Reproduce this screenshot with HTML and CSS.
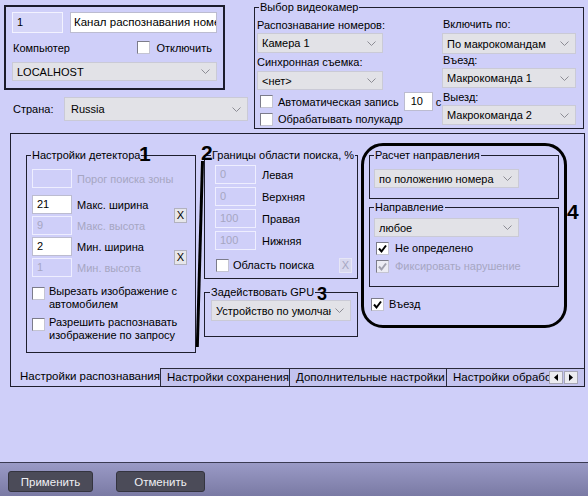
FILE: index.html
```html
<!DOCTYPE html>
<html lang="ru">

<head>
    <meta charset="UTF-8">
    <meta name="viewport" content="width=device-width, initial-scale=1.0">
    <title>Канал распознавания номеров</title>
    <link rel="stylesheet" href="styles.css">
</head>

<body>
    <div class="top">
        <div class="left-col">
            <div class="channel">
                <div class="channel-row">
                    <div class="field field-id">1</div>
                    <div class="field field-name">Канал распознавания номеров</div>
                </div>
                <div class="computer-row">
                    <span>Компьютер</span>
                    <span class="check"><span class="box"></span>Отключить</span>
                </div>
                <div class="select select-host"><span>LOCALHOST</span><svg class="chev" width="9" height="5"><polyline points="0.5,0.5 4.5,4.5 8.5,0.5" /></svg></div>
            </div>
            <div class="country">
                <span class="country-label">Страна:</span>
                <div class="select select-country"><span>Russia</span><svg class="chev" width="9" height="5"><polyline points="0.5,0.5 4.5,4.5 8.5,0.5" /></svg></div>
            </div>
        </div>

        <fieldset class="group cameras">
            <legend>Выбор видеокамер</legend>
            <div class="cam-cols">
                <div class="cam-left">
                    <div class="lbl cam-lbl1">Распознавание номеров:</div>
                    <div class="select cam-sel1"><span>Камера 1</span><svg class="chev" width="9" height="5"><polyline points="0.5,0.5 4.5,4.5 8.5,0.5" /></svg></div>
                    <div class="lbl cam-lbl2">Синхронная съемка:</div>
                    <div class="select cam-sel2"><span>&lt;нет&gt;</span><svg class="chev" width="9" height="5"><polyline points="0.5,0.5 4.5,4.5 8.5,0.5" /></svg></div>
                    <div class="auto-row">
                        <span class="check"><span class="box"></span>Автоматическая запись</span>
                        <div class="field field-sec">10</div>
                        <span class="sec">с</span>
                    </div>
                    <div class="half-row">
                        <span class="check"><span class="box"></span>Обрабатывать полукадр</span>
                    </div>
                </div>
                <div class="cam-right">
                    <div class="lbl r-lbl1">Включить по:</div>
                    <div class="select r-sel1"><span>По макрокомандам</span><svg class="chev" width="9" height="5"><polyline points="0.5,0.5 4.5,4.5 8.5,0.5" /></svg></div>
                    <div class="lbl r-lbl2">Въезд:</div>
                    <div class="select r-sel2"><span>Макрокоманда 1</span><svg class="chev" width="9" height="5"><polyline points="0.5,0.5 4.5,4.5 8.5,0.5" /></svg></div>
                    <div class="lbl r-lbl3">Выезд:</div>
                    <div class="select r-sel3"><span>Макрокоманда 2</span><svg class="chev" width="9" height="5"><polyline points="0.5,0.5 4.5,4.5 8.5,0.5" /></svg></div>
                </div>
            </div>
        </fieldset>
    </div>

    <div class="panel">
        <div class="panel-body">
            <fieldset class="group detector">
                <legend>Настройки детектора</legend>
                <div class="det-inner">
                    <div class="det-first">
                        <div class="field field-off"></div>
                        <span class="off">Порог поиска зоны</span>
                    </div>
                    <div class="det-grid">
                        <div class="field">21</div>
                        <span>Макс. ширина</span>
                        <div class="xbtn x1">X</div>
                        <div class="field field-off">9</div>
                        <span class="off">Макс. высота</span>
                        <div class="field">2</div>
                        <span>Мин. ширина</span>
                        <div class="xbtn x2">X</div>
                        <div class="field field-off">1</div>
                        <span class="off">Мин. высота</span>
                    </div>
                    <div class="check multi cut">
                        <span class="box"></span>
                        <span>Вырезать изображение с<br>автомобилем</span>
                    </div>
                    <div class="check multi allow">
                        <span class="box"></span>
                        <span>Разрешить распознавать<br>изображение по запросу</span>
                    </div>
                </div>
            </fieldset>

            <div class="mid-col">
                <fieldset class="group bounds">
                    <legend>Границы области поиска, %</legend>
                    <div class="bounds-inner">
                        <div class="bound-row"><div class="field field-off">0</div><span>Левая</span></div>
                        <div class="bound-row"><div class="field field-off">0</div><span>Верхняя</span></div>
                        <div class="bound-row"><div class="field field-off">100</div><span>Правая</span></div>
                        <div class="bound-row"><div class="field field-off">100</div><span>Нижняя</span></div>
                        <div class="area-row">
                            <span class="check"><span class="box"></span>Область поиска</span>
                            <div class="xbtn xbtn-off">X</div>
                        </div>
                    </div>
                </fieldset>
                <fieldset class="group gpu">
                    <legend>Задействовать GPU</legend>
                    <div class="select gpu-sel"><span>Устройство по умолчанию</span><svg class="chev" width="9" height="5"><polyline points="0.5,0.5 4.5,4.5 8.5,0.5" /></svg></div>
                </fieldset>
            </div>

            <div class="dir-col">
                <fieldset class="group calc">
                    <legend>Расчет направления</legend>
                    <div class="select calc-sel"><span>по положению номера</span><svg class="chev" width="9" height="5"><polyline points="0.5,0.5 4.5,4.5 8.5,0.5" /></svg></div>
                </fieldset>
                <fieldset class="group direction">
                    <legend>Направление</legend>
                    <div class="select dir-sel"><span>любое</span><svg class="chev" width="9" height="5"><polyline points="0.5,0.5 4.5,4.5 8.5,0.5" /></svg></div>
                    <div class="dir-check"><span class="check"><span class="box checked"><svg width="11" height="11"><polyline points="2,5.5 4.5,8.5 9,2.5" /></svg></span>Не определено</span></div>
                    <div class="dir-check"><span class="check off"><span class="box checked box-off"><svg width="11" height="11"><polyline points="2,5.5 4.5,8.5 9,2.5" /></svg></span>Фиксировать нарушение</span></div>
                </fieldset>
                <div class="entry-row"><span class="check"><span class="box checked"><svg width="11" height="11"><polyline points="2,5.5 4.5,8.5 9,2.5" /></svg></span>Въезд</span></div>
            </div>
        </div>

        <div class="tabs">
            <div class="tab tab-active">Настройки распознавания</div>
            <div class="tab tab2">Настройки сохранения</div>
            <div class="tab tab3">Дополнительные настройки</div>
            <div class="tab tab4">Настройки обработки</div>
            <div class="tab-arrows">
                <span class="arrow"><svg width="4" height="7"><polygon points="4,0 0,3.5 4,7" /></svg></span>
                <span class="arrow"><svg width="4" height="7"><polygon points="0,0 4,3.5 0,7" /></svg></span>
            </div>
        </div>

        <!-- пометки поверх формы -->
        <span class="mark mark1">1</span>
        <span class="mark mark2">2</span>
        <span class="mark mark3">3</span>
        <span class="mark mark4">4</span>
        <div class="bar2"></div>
        <div class="frame4"></div>
    </div>

    <div class="spacer"></div>

    <div class="footer">
        <button class="btn">Применить</button>
        <button class="btn btn-cancel">Отменить</button>
    </div>
</body>

</html>
```

FILE: styles.css
```css
* {
    box-sizing: border-box;
}

body {
    margin: 0;
    width: 588px;
    height: 496px;
    overflow: hidden;
    background-color: #cfcff9;
    font-family: "Liberation Sans", Arial, sans-serif;
    font-size: 11px;
    line-height: 14px;
    color: #000;
    display: flex;
    flex-direction: column;
}

/* common controls */

.field {
    height: 19px;
    background-color: #fff;
    border: 1px solid #bcbcd0;
    padding-left: 4px;
    line-height: 17px;
    white-space: nowrap;
    overflow: hidden;
}

.field-off {
    background-color: transparent;
    border-color: #eeeeff;
    color: #a6a6c2;
}

.off {
    color: #a6a6c2;
}

.select {
    display: flex;
    align-items: center;
    background-color: #e2e2e7;
    border: 1px solid #cacad6;
    padding: 0 6px 0 4px;
    white-space: nowrap;
    overflow: hidden;
}

.select span {
    flex: 1;
    overflow: hidden;
}

.chev {
    flex: none;
    margin-left: 4px;
}

.chev polyline {
    fill: none;
    stroke: #8c8c94;
    stroke-width: 1;
}

.check {
    display: flex;
    align-items: center;
    white-space: nowrap;
}

.box {
    width: 13px;
    height: 13px;
    flex: none;
    margin-right: 4px;
    background-color: #fff;
    border: 1px solid;
    border-color: #7c7c8a #c4c4d2 #c4c4d2 #7c7c8a;
    display: flex;
    align-items: center;
    justify-content: center;
}

.box svg polyline {
    fill: none;
    stroke: #000;
    stroke-width: 2;
}

.box-off {
    background-color: #ececf4;
}

.box-off svg polyline {
    stroke: #a0a0ae;
}

.xbtn {
    width: 13px;
    height: 15px;
    background-color: #e6e6ea;
    border: 1px solid #b2b2be;
    font-size: 11px;
    line-height: 13px;
    text-align: center;
}

.xbtn-off {
    background-color: #d8d8ee;
    border-color: #e6e6f6;
    color: #a6a6c2;
}

.group {
    margin: 0;
    padding: 0;
    min-width: 0;
    border: 1px solid #1e1e2e;
}

.group legend {
    padding: 0 1px;
    line-height: 14px;
    height: 14px;
    white-space: nowrap;
}

/* top area */

.top {
    display: flex;
    height: 133px;
    flex: none;
}

.left-col {
    width: 253px;
}

.channel {
    margin: 5px 0 0 4px;
    width: 221px;
    height: 85px;
    border: 2px solid #1c1c2c;
    padding: 5px 0 0 6px;
}

.channel-row {
    display: flex;
    gap: 7px;
}

.field-id {
    width: 51px;
    height: 21px;
    line-height: 19px;
    background-color: #d6d6f8;
    border-color: #f2f2ff;
}

.field-name {
    width: 147px;
    height: 21px;
    line-height: 19px;
    padding-left: 3px;
    font-size: 11.5px;
}

.computer-row {
    height: 29px;
    margin-right: 11px;
    padding-left: 1px;
    display: flex;
    align-items: center;
    justify-content: space-between;
}

.computer-row .box {
    margin-right: 6px;
}

.select-host {
    width: 205px;
    height: 19px;
}

.country {
    margin-top: 7px;
    display: flex;
    align-items: center;
}

.country-label {
    width: 64px;
    padding-left: 13px;
}

.select-country {
    width: 184px;
    height: 24px;
    padding-left: 6px;
}

.cameras {
    margin-left: 1px;
    width: 330px;
    height: 129px;
}

.cameras legend {
    margin-left: 4px;
}

.cam-cols {
    display: flex;
    padding-left: 2px;
}

.cam-left {
    width: 185px;
}

.cam-right {
    width: 134px;
}

.cam-lbl1 {
    height: 19px;
    padding-top: 4px;
}

.cam-sel1 {
    width: 126px;
    height: 20px;
}

.cam-lbl2 {
    height: 18px;
    padding-top: 2px;
}

.cam-sel2 {
    width: 126px;
    height: 19px;
}

.auto-row {
    margin-top: 2px;
    height: 19px;
    display: flex;
    align-items: center;
    padding-left: 3px;
}

.auto-row .box,
.half-row .box {
    margin-right: 5px;
}

.field-sec {
    width: 29px;
    height: 19px;
    margin-left: 5px;
    padding-left: 6px;
}

.sec {
    margin-left: 3px;
}

.half-row {
    height: 16px;
    display: flex;
    align-items: center;
    padding-left: 3px;
}

.r-lbl1 {
    height: 19px;
    padding-top: 3px;
    padding-left: 1px;
}

.r-sel1 {
    height: 21px;
}

.r-lbl2 {
    height: 14px;
    line-height: 13px;
    padding-left: 1px;
}

.r-sel2 {
    height: 20px;
}

.r-lbl3 {
    height: 17px;
    padding-top: 2px;
    padding-left: 1px;
}

.r-sel3 {
    height: 20px;
}

/* main panel */

.panel {
    position: relative;
    flex: none;
    margin-left: 10px;
    width: 575px;
    height: 254px;
    border: 1px solid #1e1e2e;
    display: flex;
    flex-direction: column;
}

.panel-body {
    flex: 1;
    display: flex;
    align-items: flex-start;
    padding: 14px 0 0 15px;
}

.detector {
    width: 170px;
    height: 205px;
}

.detector legend {
    margin-left: 4px;
}

.det-inner {
    padding-left: 5px;
}

.det-first {
    margin-top: 7px;
    display: flex;
    align-items: center;
    gap: 5px;
}

.det-first .field {
    width: 40px;
    height: 19px;
}

.det-grid {
    margin-top: 7px;
    display: grid;
    grid-template-columns: 40px 92px 13px;
    grid-auto-rows: 19px;
    column-gap: 5px;
    row-gap: 2px;
    align-items: center;
}

.det-grid .x1 {
    grid-column: 3;
    grid-row: 1 / 3;
    margin-top: 1px;
}

.det-grid .x2 {
    grid-column: 3;
    grid-row: 3 / 5;
}

.multi {
    align-items: flex-start;
    line-height: 13px;
}

.multi .box {
    margin-top: 2px;
}

.cut {
    margin-top: 8px;
}

.allow {
    margin-top: 5px;
}

.mid-col {
    margin-left: 8px;
    width: 154px;
}

.bounds {
    height: 131px;
}

.bounds legend {
    margin-left: 6px;
}

.bounds-inner {
    padding: 0 5px 0 10px;
}

.bound-row {
    margin-top: 3px;
    display: flex;
    align-items: center;
    gap: 6px;
}

.bound-row .field {
    width: 41px;
}

.area-row {
    margin-top: 8px;
    height: 14px;
    display: flex;
    align-items: center;
    justify-content: space-between;
    padding-left: 1px;
}

.gpu {
    margin-top: 6px;
    height: 52px;
}

.gpu legend {
    margin-left: 5px;
}

.gpu-sel {
    margin: 1px 0 0 6px;
    width: 140px;
    height: 21px;
}

.dir-col {
    margin-left: 11px;
    width: 190px;
}

.calc {
    height: 51px;
}

.calc legend,
.direction legend {
    margin-left: 4px;
}

.calc-sel {
    margin: 7px 0 0 4px;
    width: 145px;
    height: 19px;
}

.direction {
    margin-top: 1px;
    height: 87px;
}

.dir-sel {
    margin: 4px 0 0 4px;
    width: 145px;
    height: 19px;
}

.dir-check {
    margin-top: 4px;
    padding-left: 6px;
    height: 14px;
    display: flex;
    align-items: center;
}

.dir-check .box {
    margin-right: 6px;
}

.entry-row {
    margin-top: 10px;
    padding-left: 2px;
    display: flex;
}

.entry-row .box {
    margin-right: 5px;
}

/* tabs */

.tabs {
    flex: none;
    height: 18px;
    display: flex;
}

.tab {
    height: 18px;
    line-height: 16px;
    white-space: nowrap;
    overflow: hidden;
    font-size: 11.5px;
}

.tab-active {
    width: 149px;
    padding-left: 9px;
}

.tab2,
.tab3,
.tab4 {
    background-color: #c3c3ee;
    border-top: 1px solid #2a2a3a;
    border-left: 1px solid #2a2a3a;
    padding-left: 6px;
}

.tab2 {
    width: 129px;
}

.tab3 {
    width: 157px;
}

.tab4 {
    flex: 1;
}

.tab-arrows {
    flex: none;
    display: flex;
    gap: 1px;
    padding: 2px 6px 0 0;
    background-color: #c3c3ee;
    border-top: 1px solid #2a2a3a;
}

.arrow {
    width: 14px;
    height: 13px;
    background-color: #ececf0;
    border: 1px solid #a8a8b6;
    display: flex;
    align-items: center;
    justify-content: center;
}

.arrow polygon {
    fill: #000;
}

/* annotation marks */

.mark {
    position: absolute;
    font-weight: bold;
    font-size: 21px;
    line-height: 20px;
}

.mark1 {
    left: 128px;
    top: 10px;
}

.mark2 {
    left: 190px;
    top: 9px;
}

.mark3 {
    left: 306px;
    top: 150px;
    font-size: 18px;
}

.mark4 {
    left: 556px;
    top: 68px;
}

.bar2 {
    position: absolute;
    left: 190px;
    top: 27px;
    width: 3px;
    height: 186px;
    background-color: #000;
    transform-origin: top;
    transform: rotate(1.6deg);
}

.frame4 {
    position: absolute;
    left: 350px;
    top: 9px;
    width: 206px;
    height: 185px;
    border: 3px solid #000;
    border-radius: 22px;
}

/* footer */

.spacer {
    flex: 1;
}

.footer {
    flex: none;
    height: 34px;
    border-top: 1px solid #3a3a52;
    background: linear-gradient(#9a9ac6, #7a7aa4);
    display: flex;
    align-items: flex-start;
    padding: 8px 0 0 8px;
    gap: 23px;
}

.btn {
    width: 85px;
    height: 21px;
    background-color: #4b4b58;
    border: 1px solid #34343f;
    border-radius: 3px;
    color: #f0f0f4;
    font-family: "Liberation Sans", Arial, sans-serif;
    font-size: 11.5px;
    padding: 0;
}

.btn-cancel {
    width: 89px;
}
```
